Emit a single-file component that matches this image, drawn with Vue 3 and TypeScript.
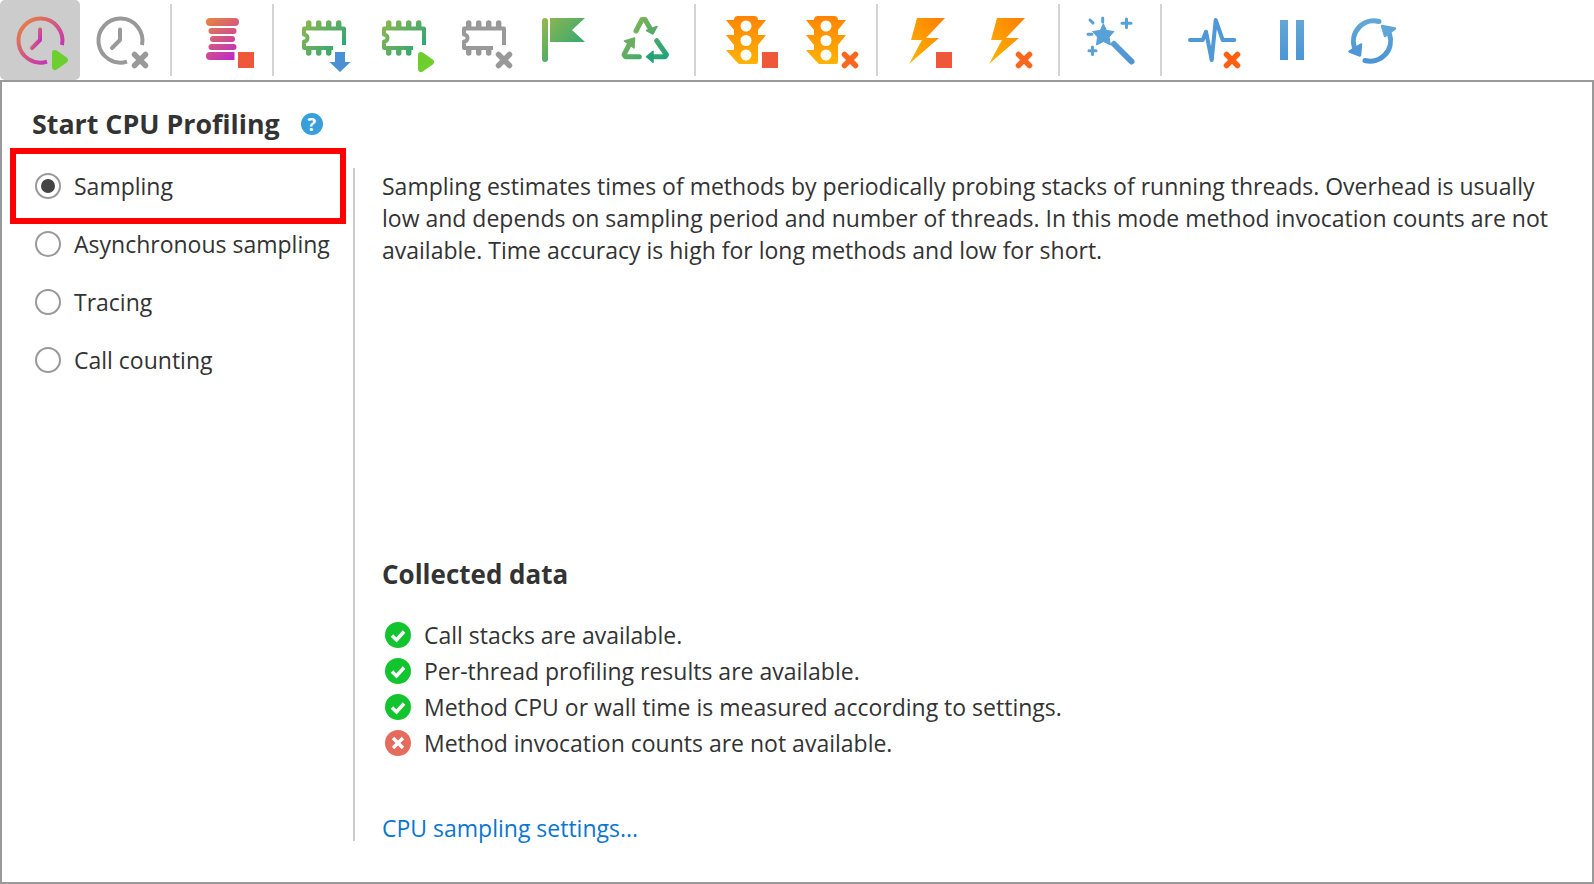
<script setup lang="ts">
type ToolItem = { sep: true } | { sep?: false; icon: string; active?: boolean; title: string }

const modes = ['Sampling', 'Asynchronous sampling', 'Tracing', 'Call counting']

const tools: ToolItem[] = [
  { icon: 'cpuStart', active: true, title: 'Start CPU profiling' },
  { icon: 'cpuCancel', title: 'Cancel CPU profiling' },
  { sep: true },
  { icon: 'allocStop', title: 'Stop allocation recording' },
  { sep: true },
  { icon: 'snapDown', title: 'Capture memory snapshot' },
  { icon: 'snapPlay', title: 'Start memory recording' },
  { icon: 'snapCancel', title: 'Cancel memory recording' },
  { icon: 'flag', title: 'Advance object generation' },
  { icon: 'gc', title: 'Force garbage collection' },
  { sep: true },
  { icon: 'lightStop', title: 'Stop monitor profiling' },
  { icon: 'lightCancel', title: 'Cancel monitor profiling' },
  { sep: true },
  { icon: 'boltStop', title: 'Stop exception profiling' },
  { icon: 'boltCancel', title: 'Cancel exception profiling' },
  { sep: true },
  { icon: 'wand', title: 'Triggers' },
  { sep: true },
  { icon: 'pulse', title: 'Stop telemetry' },
  { icon: 'pause', title: 'Pause' },
  { icon: 'refresh', title: 'Refresh' },
]

const collected = [
  { ok: true, text: 'Call stacks are available.' },
  { ok: true, text: 'Per-thread profiling results are available.' },
  { ok: true, text: 'Method CPU or wall time is measured according to settings.' },
  { ok: false, text: 'Method invocation counts are not available.' },
]

const lightBody =
  'M32 16h16a4 4 0 0 1 4 4h8l-8 10v5h8l-8 10v17a2 2 0 0 1-2 2H33l-5-5-8-9h8v-5l-8-10h8v-5l-8-10h8a4 4 0 0 1 4-4z'
</script>

<template>
  <div class="page">
    <svg width="0" height="0" class="defs">
      <defs>
        <linearGradient id="cpuGrad" x1="0" y1="0" x2="1" y2="1">
          <stop offset="0" stop-color="#e8883a" />
          <stop offset="1" stop-color="#bd22d0" />
        </linearGradient>
        <linearGradient id="allocGrad" gradientUnits="userSpaceOnUse" x1="24" y1="18" x2="54" y2="60">
          <stop offset="0" stop-color="#e8883a" />
          <stop offset="1" stop-color="#bd22d0" />
        </linearGradient>
        <linearGradient id="snapGrad" gradientUnits="userSpaceOnUse" x1="18" y1="18" x2="62" y2="58">
          <stop offset="0" stop-color="#95b84e" />
          <stop offset="1" stop-color="#1fa37a" />
        </linearGradient>
        <linearGradient id="lightGrad" x1="0" y1="0" x2="0" y2="1">
          <stop offset="0" stop-color="#ff8400" />
          <stop offset="1" stop-color="#ffb300" />
        </linearGradient>
        <linearGradient id="boltGrad" x1="1" y1="0" x2="0" y2="1">
          <stop offset="0" stop-color="#ff7c00" />
          <stop offset="1" stop-color="#ffb800" />
        </linearGradient>
        <linearGradient id="blueGrad" gradientUnits="userSpaceOnUse" x1="0" y1="18" x2="0" y2="64">
          <stop offset="0" stop-color="#64a8d6" />
          <stop offset="1" stop-color="#4a93d6" />
        </linearGradient>
      </defs>
    </svg>

    <div class="toolbar">
      <template v-for="(tool, i) in tools" :key="i">
        <span v-if="tool.sep" class="tool-sep"></span>
        <button v-else class="tool-btn" :class="{ active: tool.active }" :title="tool.title">
          <svg viewBox="0 0 80 80" width="80" height="80" fill="none" stroke-linecap="round" stroke-linejoin="round">
            <g v-if="tool.icon === 'cpuStart' || tool.icon === 'cpuCancel'">
              <g :stroke="tool.icon === 'cpuStart' ? 'url(#cpuGrad)' : '#999'" stroke-width="4">
                <path d="M62 45A22 22 0 1 0 47 61.6" stroke-linecap="butt" />
                <path d="M40 29.5V40l-8 8" />
              </g>
              <path v-if="tool.icon === 'cpuStart'" d="M55 53l10 7-10 7z" fill="#6ccf2e" stroke="#6ccf2e" stroke-width="6" />
              <path v-else d="M54.500 54.500l11 11M65.500 54.500l-11 11" stroke="#999" stroke-width="5.500" />
            </g>

            <g v-else-if="tool.icon === 'allocStop'" fill="url(#allocGrad)">
              <rect x="24" y="18" width="33" height="8" rx="4" />
              <rect x="26.500" y="28" width="28" height="6" rx="3" />
              <rect x="28" y="36" width="25" height="6" rx="3" />
              <rect x="26.500" y="44" width="28" height="6" rx="3" />
              <path d="M28 52h24.500v8H28a4 4 0 0 1 0-8z" />
              <rect x="56" y="52" width="16" height="16" fill="#ef573a" />
            </g>

            <g v-else-if="tool.icon.startsWith('snap')">
              <g :stroke="tool.icon === 'snapCancel' ? '#999' : 'url(#snapGrad)'" stroke-width="4">
                <path d="M60 45V28.500H20v6a3.500 3.500 0 0 1 0 7V48h29" stroke-linecap="butt" />
                <path d="M24.700 23v4M34.700 23v4M44.700 23v4M54.700 23v4M24.700 49v4M34.700 49v4M44.700 49v4" stroke-width="5.500" />
              </g>
              <path v-if="tool.icon === 'snapDown'" d="M51 52h10v10h5.500L56 72 45.500 62H51z" fill="#4a90d4" />
              <path v-else-if="tool.icon === 'snapPlay'" d="M57 55l10 7-10 7z" fill="#6ccf2e" stroke="#6ccf2e" stroke-width="6" />
              <path v-else d="M54.500 54.500l11 11M65.500 54.500l-11 11" stroke="#999" stroke-width="5.500" />
            </g>

            <g v-else-if="tool.icon === 'flag'">
              <rect x="18" y="18" width="6" height="44" rx="3" fill="url(#snapGrad)" />
              <path d="M26 18h35L48 30l13 12H26z" fill="url(#snapGrad)" />
            </g>

            <g v-else-if="tool.icon === 'gc'">
              <g stroke="url(#snapGrad)" stroke-width="5">
                <path d="M32 31l6-11.500h3l5.500 9.500" />
                <path d="M35.300 56.700H21.500l-1.500-2 6-11.500" />
                <path d="M52.700 40.700l9.800 14-1.500 2H47.700" />
              </g>
              <path d="M53 26.500l-10.500 4 6.500 3.500z" fill="#5aa968" stroke="#5aa968" stroke-width="1.500" />
              <path d="M20.500 41l10-3-.5 10z" fill="#6bae62" stroke="#6bae62" stroke-width="1.500" />
              <path d="M42.500 56.700l6.500-5.500v11z" fill="#22a278" stroke="#22a278" stroke-width="1.500" />
            </g>

            <g v-else-if="tool.icon.startsWith('light')">
              <path :d="lightBody" fill="url(#lightGrad)" />
              <circle cx="40" cy="26" r="5.500" fill="#fff" />
              <circle cx="40" cy="40.500" r="5.500" fill="#fff" />
              <circle cx="40" cy="55" r="5.500" fill="#fff" />
              <rect v-if="tool.icon === 'lightStop'" x="56" y="52" width="16" height="16" fill="#ef573a" />
              <path v-else d="M58.500 54.500l11 11M69.500 54.500l-11 11" stroke="#f9661e" stroke-width="5.500" />
            </g>

            <g v-else-if="tool.icon.startsWith('bolt')">
              <path d="M29 18h28L38 38h13L21 64l13-24H23z" fill="url(#boltGrad)" />
              <rect v-if="tool.icon === 'boltStop'" x="48" y="52" width="16" height="16" fill="#ef573a" />
              <path v-else d="M50.500 54.500l11 11M61.500 54.500l-11 11" stroke="#f9661e" stroke-width="5.500" />
            </g>

            <g v-else-if="tool.icon === 'wand'">
              <path d="M33.500 24l3 6.500 7.500 1-5 5.500 1.500 8-7-3.500-7 3.500 1-8-5-5.500 7.500-1z" fill="#57a0d8" stroke="#57a0d8" stroke-width="1" />
              <path d="M44 44l17.500 17.500" stroke="url(#blueGrad)" stroke-width="6" />
              <g stroke="#57a0d8" stroke-width="3">
                <path d="M32.700 18v4M20 20l3 3M18 34.300h4M52 23.300h9M56.500 19v8.600M19 50.700h7M22.500 47v7.400" />
              </g>
            </g>

            <g v-else-if="tool.icon === 'pulse'">
              <path d="M18 40h12.700l3.300-8.300L39.700 60l4-40 7 20h11.600" stroke="#4f9ad6" stroke-width="4" />
              <path d="M54.500 54.500l11 11M65.500 54.500l-11 11" stroke="#ff6010" stroke-width="5.500" />
            </g>

            <g v-else-if="tool.icon === 'pause'" fill="url(#blueGrad)">
              <rect x="28" y="20" width="8" height="40" />
              <rect x="44" y="20" width="8" height="40" />
            </g>

            <g v-else-if="tool.icon === 'refresh'">
              <g stroke="url(#blueGrad)" stroke-width="5">
                <path d="M47 21.500A20.500 20.500 0 0 0 22.500 48" />
                <path d="M33 60.500A20.500 20.500 0 0 0 57.500 34" />
              </g>
              <path d="M17.500 51.500L29 44.500l-1 11z" fill="#4f97d6" stroke="#4f97d6" stroke-width="2.500" />
              <path d="M63 28.500L50 26l3 10z" fill="#5fa5d6" stroke="#5fa5d6" stroke-width="2.500" />
            </g>
          </svg>
        </button>
      </template>
    </div>

    <div class="panel">
      <aside class="side">
        <h1 class="side-title">
          Start CPU Profiling
          <span class="help">?</span>
        </h1>
        <ul class="mode-list">
          <li v-for="(mode, i) in modes" :key="mode" class="mode" :class="{ marked: i === 0 }">
            <span class="radio" :class="{ on: i === 0 }"></span>
            {{ mode }}
          </li>
        </ul>
      </aside>

      <main class="detail">
        <p class="desc">
          Sampling estimates times of methods by periodically probing stacks of running threads. Overhead is usually
          low and depends on sampling period and number of threads. In this mode method invocation counts are not
          available. Time accuracy is high for long methods and low for short.
        </p>
        <h2 class="data-title">Collected data</h2>
        <ul class="data-list">
          <li v-for="row in collected" :key="row.text" class="data-row">
            <svg viewBox="0 0 26 26" width="26" height="26" class="state">
              <circle cx="13" cy="13" r="13" :fill="row.ok ? '#12c52f' : '#e56b5d'" />
              <path v-if="row.ok" d="M7 13.500l4.500 4.500L19 9.500" fill="none" stroke="#fff" stroke-width="3.500" />
              <path v-else d="M8 8l10 10M18 8L8 18" fill="none" stroke="#fff" stroke-width="3.500" />
            </svg>
            {{ row.text }}
          </li>
        </ul>
        <a class="settings-link" href="#">CPU sampling settings...</a>
      </main>
    </div>
  </div>
</template>

<style>
html,
body {
  margin: 0;
  height: 100%;
  background: #fff;
}
</style>

<style scoped>
.page {
  height: 884px;
  display: flex;
  flex-direction: column;
  font-family: "Open Sans", "Noto Sans", sans-serif;
  color: #333;
  background: #fff;
}

.defs {
  position: absolute;
}

.toolbar {
  display: flex;
  align-items: center;
  height: 80px;
  flex: none;
}

.tool-btn {
  width: 80px;
  height: 80px;
  padding: 0;
  border: none;
  background: none;
  border-radius: 5px;
  flex: none;
}

.tool-btn.active {
  background: #ccc;
}

.tool-btn svg {
  display: block;
}

.tool-sep {
  width: 2px;
  height: 72px;
  margin: 0 10px;
  background: #d4d4d4;
  flex: none;
}

.panel {
  flex: 1;
  display: flex;
  min-height: 0;
  border: 2px solid #999;
}

.side {
  width: 351px;
  flex: none;
  box-sizing: border-box;
  padding-top: 24px;
}

.side-title {
  margin: 0 0 0 30px;
  display: flex;
  align-items: center;
  gap: 21px;
  font-size: 26.800px;
  line-height: 36px;
  font-weight: 700;
}

.help {
  width: 22px;
  height: 22px;
  border-radius: 50%;
  background: #379fdb;
  color: #fff;
  font-size: 18px;
  line-height: 22px;
  text-align: center;
}

.mode-list {
  list-style: none;
  margin: 15px 0 0;
  padding: 0;
}

.mode {
  display: flex;
  align-items: center;
  gap: 13px;
  height: 58px;
  padding-left: 33px;
  font-size: 23px;
}

.mode.marked {
  position: relative;
}

.mode.marked::after {
  content: "";
  position: absolute;
  left: 8px;
  top: -9px;
  width: 336px;
  height: 76px;
  box-sizing: border-box;
  border: 6px solid #f00;
}

.radio {
  width: 26px;
  height: 26px;
  box-sizing: border-box;
  border: 2px solid #999;
  border-radius: 50%;
  display: flex;
  align-items: center;
  justify-content: center;
}

.radio.on::before {
  content: "";
  width: 14px;
  height: 14px;
  border-radius: 50%;
  background: #444;
}

.detail {
  flex: 1;
  min-width: 0;
  display: flex;
  flex-direction: column;
  margin: 86px 0 41px;
  padding: 0 30px 0 27px;
  border-left: 2px solid #ccc;
}

.desc {
  margin: 2px 0 0;
  font-size: 23px;
  line-height: 32px;
}

.data-title {
  margin: auto 0 0;
  font-size: 26px;
  line-height: 36px;
  font-weight: 700;
}

.data-list {
  list-style: none;
  margin: 25px 0 0;
  padding: 0;
}

.data-row {
  display: flex;
  align-items: center;
  gap: 13px;
  height: 36px;
  padding-left: 3px;
  font-size: 23px;
}

.state {
  flex: none;
}

.settings-link {
  margin-top: 54px;
  font-size: 23px;
  line-height: 26px;
  color: #0b76cf;
  text-decoration: none;
}
</style>
